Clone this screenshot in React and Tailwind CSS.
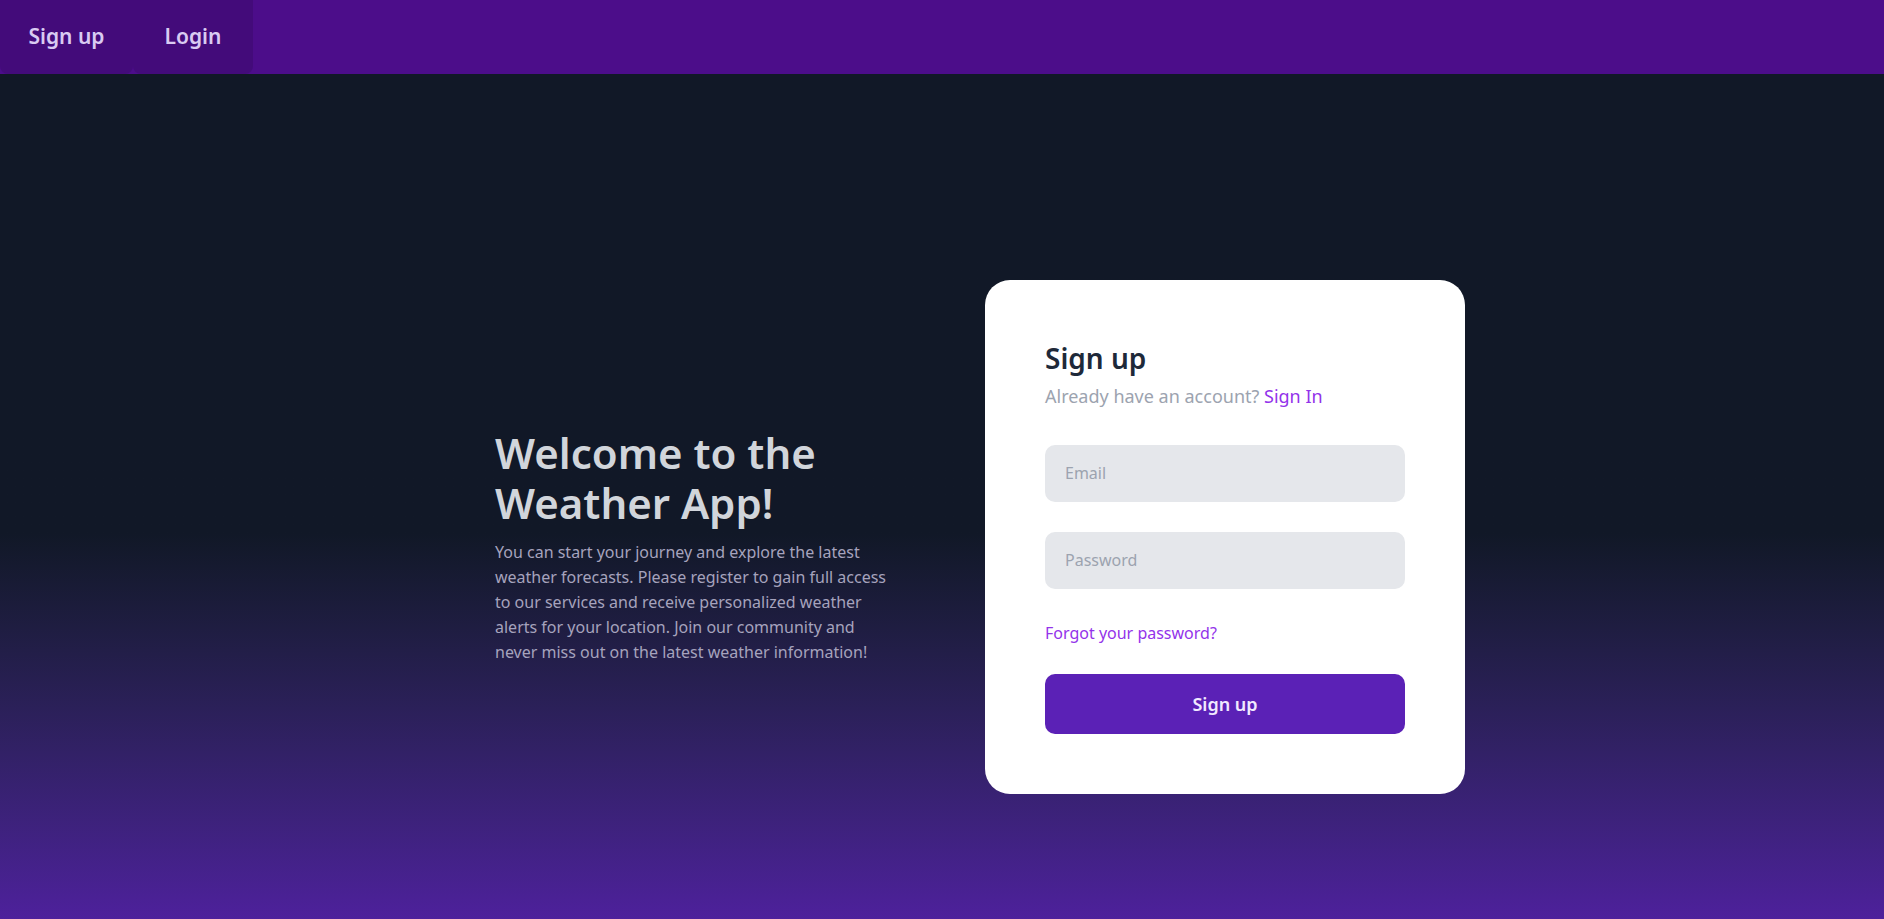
function Navbar() {
  return (
    <nav className="h-[74px] bg-[#4c0d8a] flex">
      <a href="#" className="w-[133px] h-full flex items-center justify-center rounded-b-lg bg-[#430b7a] text-[21px] font-semibold text-[#d9cbf2]">
        Sign up
      </a>
      <a href="#" className="w-[120px] h-full flex items-center justify-center rounded-b-lg bg-[#430b7a] text-[21px] font-semibold text-[#d9cbf2]">
        Login
      </a>
    </nav>
  );
}

function SignUpCard() {
  return (
    <div className="w-[480px] bg-white rounded-[25px] p-[60px]">
      <h2 className="text-[28px] leading-9 font-semibold text-gray-800">Sign up</h2>
      <p className="mt-1.5 text-lg leading-7 text-[#9ca3af]">
        Already have an account?{" "}
        <a href="#" className="text-[#9333ea]">Sign In</a>
      </p>

      <input
        type="email"
        placeholder="Email"
        className="mt-[35px] w-full h-[57px] rounded-[10px] bg-[#e5e7eb] px-5 text-base text-gray-700 placeholder-[#9ca3af] outline-none"
      />
      <input
        type="password"
        placeholder="Password"
        className="mt-[30px] w-full h-[57px] rounded-[10px] bg-[#e5e7eb] px-5 text-base text-gray-700 placeholder-[#9ca3af] outline-none"
      />

      <a href="#" className="block mt-8 text-base leading-6 text-[#9333ea]">
        Forgot your password?
      </a>

      <button className="mt-[29px] w-full h-[60px] rounded-[10px] bg-[#5b21b6] text-lg font-semibold text-[#f1e9ff]">
        Sign up
      </button>
    </div>
  );
}

export default function App() {
  return (
    <div style={{ fontFamily: '"Noto Sans", sans-serif' }}>
      <Navbar />
      <main className="min-h-screen pt-[6px] bg-linear-to-b from-[#111827] from-50% to-[#5a1db4] flex items-center justify-center gap-[90px] pl-[76px]">
        <div className="w-[400px] mt-5">
          <h1 className="text-[42px] leading-[50px] font-semibold text-[#d1d5db]">
            Welcome to the Weather App!
          </h1>
          <p className="mt-3 text-base leading-[25px] text-[#a6a3bd]">
            You can start your journey and explore the latest weather forecasts. Please register to gain full access to our services and receive personalized weather alerts for your location. Join our community and never miss out on the latest weather information!
          </p>
        </div>
        <SignUpCard />
      </main>
    </div>
  );
}
